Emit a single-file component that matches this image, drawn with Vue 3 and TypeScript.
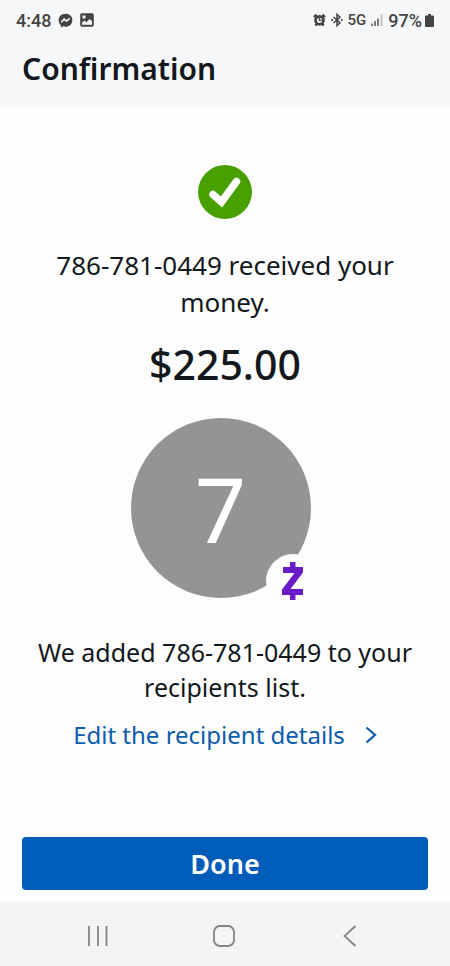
<script setup lang="ts">
const phone: string = '786-781-0449'
const amount: string = '$225.00'
const initial: string = phone.charAt(0)
</script>

<template>
  <div class="screen">
    <header class="top">
      <div class="status">
        <div class="status-group">
          <span class="clock">4:48</span>
          <svg viewBox="0 0 16 16" width="15" height="15" aria-hidden="true">
            <path d="M8 .8C3.800.8.7 3.800.7 7.600c0 2.100.9 3.900 2.300 5.200v2.600l2.400-1.200c.8.2 1.700.4 2.600.4 4.200 0 7.300-3 7.300-7S12.200.8 8 .8z" fill="#444" />
            <path d="M3.500 9.800 6.500 6.300 9 8.700l3.500-2.900" fill="none" stroke="#f6f7f8" stroke-width="1.700" stroke-linejoin="round" />
          </svg>
          <svg viewBox="0 0 14 14" width="14" height="14" aria-hidden="true">
            <rect x="1" y="1" width="12" height="12" rx="1" fill="#444" stroke="#444" stroke-width="1.600" />
            <path d="M2 11.800V9.500l2.500-2 2 1.700L9.500 6 12 8v3.800z" fill="#f6f7f8" />
            <path d="M2.500 2.500h3v3h-3z" fill="#f6f7f8" />
          </svg>
        </div>
        <div class="status-group right">
          <svg viewBox="0 0 14 14" width="13" height="14" aria-hidden="true">
            <path d="M1 3.800 3.800 1.200M13 3.800 10.200 1.200M2.500 13l2-2.500M11.500 13l-2-2.500" stroke="#444" stroke-width="2.400" />
            <circle cx="7" cy="7.300" r="4.300" fill="#f6f7f8" stroke="#444" stroke-width="3" />
            <path d="M7 4.500v3h2.300" fill="none" stroke="#444" stroke-width="1.400" />
          </svg>
          <svg viewBox="0 0 12 14" width="12" height="14" aria-hidden="true">
            <path d="M2.500 4 9 9.800 6 12.600V1.400L9 4.200 2.500 10" fill="none" stroke="#444" stroke-width="1.500" />
            <circle cx="1.200" cy="7" r="1.100" fill="#444" />
            <circle cx="10.800" cy="7" r="1.100" fill="#444" />
          </svg>
          <span class="network">5G</span>
          <svg viewBox="0 0 12 12" width="12" height="12" aria-hidden="true">
            <path d="M1 9.500V12M4 7v5M7 4.500V12" stroke="#555" stroke-width="1.500" />
            <path d="M10.500 0v12" stroke="#c4c4c4" stroke-width="2" />
          </svg>
          <span class="charge">
            <span class="percent">97%</span>
            <svg viewBox="0 0 9 13" width="9" height="13" aria-hidden="true">
              <path d="M3 0h3v1.500h2a1 1 0 0 1 1 1V12a1 1 0 0 1-1 1H1a1 1 0 0 1-1-1V2.500a1 1 0 0 1 1-1h2z" fill="#444" />
            </svg>
          </span>
        </div>
      </div>
      <h1>Confirmation</h1>
    </header>

    <main>
      <svg class="check" viewBox="0 0 54 54" width="54" height="54" role="img" aria-label="Success">
        <circle cx="27" cy="27" r="27" fill="#48a000" />
        <path d="M15 29.500 23.500 37 38.500 16.500" fill="none" stroke="#fff" stroke-width="7.500" stroke-linecap="round" stroke-linejoin="miter" />
      </svg>
      <p class="received">{{ phone }} received your money.</p>
      <p class="amount">{{ amount }}</p>
      <div class="recipient">
        <div class="avatar">{{ initial }}</div>
        <div class="badge">
          <svg viewBox="0 0 22 38" width="22" height="38" role="img" aria-label="Zelle">
            <path d="M8 0h5.500v5H21v5.500L8.500 27H21v6h-7.500v5H8v-5H0v-5.500L12.500 11H1V5h7z" fill="#6a1bc8" />
          </svg>
        </div>
      </div>
      <p class="added">We added {{ phone }} to your recipients list.</p>
      <a class="edit" href="#">
        <span>Edit the recipient details</span>
        <svg viewBox="0 0 12 18" width="12" height="18" aria-hidden="true">
          <path d="M1.500 1.500 10 9l-8.500 7.500" fill="none" stroke="#0b5cab" stroke-width="2.200" />
        </svg>
      </a>
      <button class="done" type="button">Done</button>
    </main>

    <nav aria-label="System navigation">
      <button type="button" aria-label="Recent apps">
        <svg viewBox="0 0 22 22" width="22" height="22">
          <path d="M2 1v20M11 1v20M19.500 1v20" stroke="#858585" stroke-width="1.800" />
        </svg>
      </button>
      <button type="button" aria-label="Home">
        <svg viewBox="0 0 22 22" width="22" height="22">
          <rect x="1" y="1" width="20" height="20" rx="6" fill="none" stroke="#858585" stroke-width="1.800" />
        </svg>
      </button>
      <button type="button" aria-label="Back">
        <svg viewBox="0 0 22 22" width="22" height="22">
          <path d="M16.500 1 5.500 11l11 10" fill="none" stroke="#858585" stroke-width="1.800" />
        </svg>
      </button>
    </nav>
  </div>
</template>

<style>
body {
  margin: 0;
  background: #fdfdfd;
}
</style>

<style scoped>
.screen {
  display: flex;
  flex-direction: column;
  min-height: 100vh;
  font-family: "Noto Sans", "Open Sans", sans-serif;
  color: #12181c;
  background: #fdfdfd;
}

.top {
  padding-bottom: 15px;
  background: #f6f7f8;
}

.status {
  display: flex;
  justify-content: space-between;
  align-items: center;
  height: 40px;
  padding: 0 16px;
  font-family: Roboto, sans-serif;
  font-weight: 500;
  color: #444;
}

.status-group {
  display: flex;
  align-items: center;
  gap: 7px;
}

.status-group.right {
  gap: 5px;
}

.charge {
  display: flex;
  align-items: center;
  gap: 3px;
}

.clock,
.percent {
  font-size: 18px;
}

.network {
  font-size: 15px;
}

h1 {
  margin: 0;
  padding: 7px 22px 0;
  font-size: 30px;
  line-height: 43px;
  font-weight: 600;
}

main {
  flex: 1;
  display: flex;
  flex-direction: column;
  align-items: center;
  padding: 60px 22px 12px;
  text-align: center;
}

.check {
  display: block;
}

p {
  margin: 0;
}

.received {
  margin-top: 28px;
  font-size: 26px;
  line-height: 37px;
}

.amount {
  margin-top: 14px;
  font-size: 41px;
  line-height: 58px;
  font-weight: 500;
}

.recipient {
  position: relative;
  width: 189px;
  margin-top: 25px;
}

.avatar {
  display: grid;
  place-items: center;
  width: 180px;
  height: 180px;
  border-radius: 50%;
  background: #949494;
  color: #fff;
  font-size: 90px;
  line-height: 90px;
}

.badge {
  position: absolute;
  right: 0;
  bottom: -10px;
  display: grid;
  place-items: center;
  width: 54px;
  height: 54px;
  border-radius: 50%;
  background: #fdfdfd;
}

.added {
  margin-top: 37px;
  font-size: 25px;
  line-height: 35px;
}

.edit {
  display: flex;
  align-items: center;
  gap: 20px;
  margin-top: 12px;
  font-size: 24px;
  line-height: 36px;
  color: #0b5cab;
  text-decoration: none;
}

.done {
  width: 100%;
  height: 53px;
  margin-top: auto;
  border: 0;
  border-radius: 4px;
  background: #005cb9;
  color: #fff;
  font: 600 27px/36px "Noto Sans", "Open Sans", sans-serif;
}

nav {
  display: flex;
  justify-content: space-around;
  align-items: center;
  padding: 10px 37px 6px 35px;
  background: #f4f4f4;
}

nav button {
  display: grid;
  place-items: center;
  width: 48px;
  height: 48px;
  padding: 0;
  border: 0;
  background: none;
}
</style>
